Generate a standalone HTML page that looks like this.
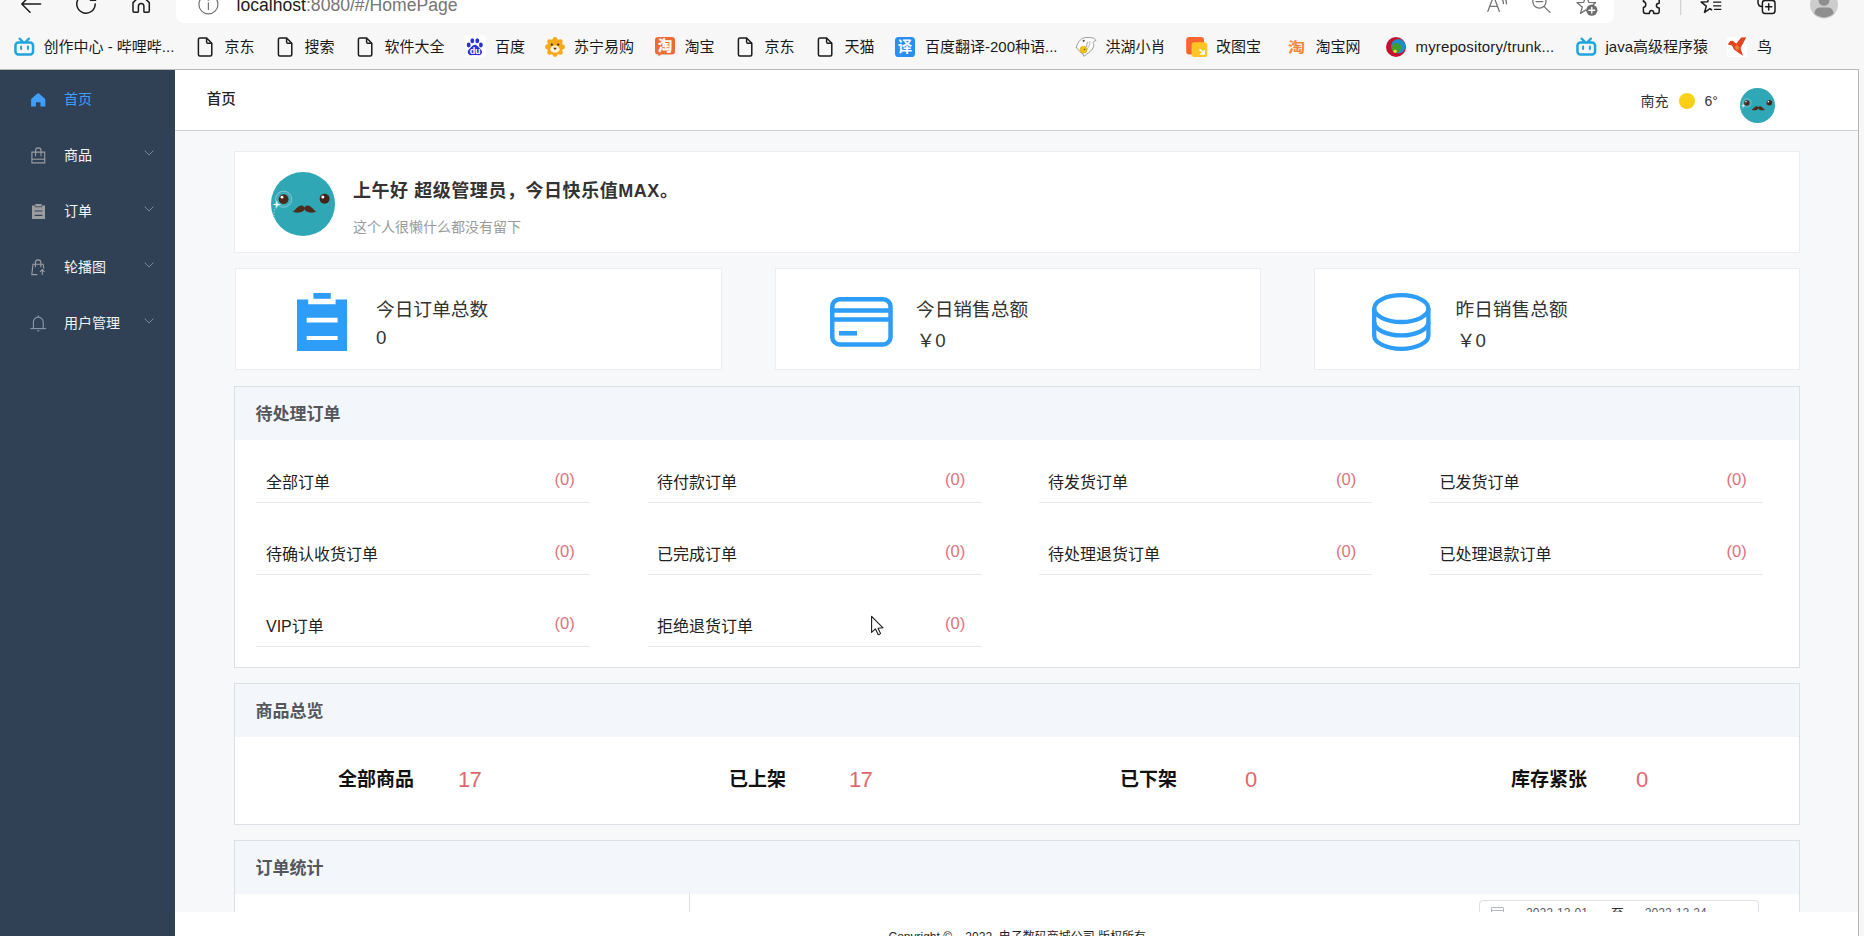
<!DOCTYPE html>
<html lang="zh-CN">
<head>
<meta charset="utf-8">
<title>首页</title>
<style>
*{box-sizing:border-box;margin:0;padding:0}
html,body{width:1864px;height:936px;overflow:hidden;background:#f7f7f7}
body{position:relative;font-family:"Liberation Sans","Noto Sans CJK SC",sans-serif;color:#303133;font-size:14px}
.abs{position:absolute}
svg{display:block;overflow:visible}
/* browser chrome */
#chrome{position:absolute;left:0;top:0;width:1864px;height:69px;background:#f7f7f7}
#addr{position:absolute;left:176px;top:-10px;width:1438px;height:33px;background:#fff;border-radius:8px}
#url{position:absolute;left:236.500px;top:-4.900px;font-size:17.600px;line-height:20px;color:#1b1b1b;white-space:nowrap}
#url span{color:#767676}
.bm{position:absolute;margin-left:-0.500px;top:35.500px;height:22px;line-height:22px;font-size:15px;color:#1a1a1a;white-space:nowrap}
.bi{position:absolute}
/* app */
#topline{position:absolute;left:0;top:69px;width:1859px;height:1px;background:#b9b9b9}
#rightline{position:absolute;left:1858px;top:69px;width:1px;height:867px;background:#b4b4b4}
#side{position:absolute;left:0;top:70px;width:175px;height:866px;background:#304156}
.mi{position:absolute;left:0;width:175px;height:56px}
.mi .t{position:absolute;left:64px;top:18px;font-size:14px;line-height:20px;color:#f2f4f7;white-space:nowrap}
.mi .ic{position:absolute;left:30px;top:20px}
.mi .ar{position:absolute;left:144.3px;top:22.6px}
#head{position:absolute;left:175px;top:70px;width:1683px;height:61px;background:#fff;border-bottom:1px solid #cfd0d3}
#main{position:absolute;left:175px;top:131px;width:1683px;height:781px;background:#f7f8fa}
#cards{position:absolute;left:0;top:0;width:1858px;height:912px;overflow:hidden}
#foot{position:absolute;left:175px;top:912px;width:1683px;height:24px;background:#fff}
.card{position:absolute;background:#fff;border:1px solid #ededf1}
.pn{border-color:#dcdfe6}
.ph{position:absolute;left:0;top:0;right:0;height:53px;background:#f3f6fb}
.ph span{position:absolute;left:20.5px;top:16px;font-size:17px;line-height:24px;font-weight:700;color:#54575c;white-space:nowrap}
.oi{position:absolute;width:335.500px;height:44px;border-bottom:1px solid #e6e7ea}
.oi .l{position:absolute;left:10px;top:13.3px;font-size:16px;line-height:22px;color:#222;white-space:nowrap}
.oi .r{position:absolute;right:15.5px;top:9.7px;font-size:16.6px;line-height:22px;color:#e2727b;white-space:nowrap}
.ol{position:absolute;width:333px;height:1px;background:#e7e8eb}
.oL{position:absolute;font-size:16px;line-height:22px;color:#222;white-space:nowrap}
.oR{position:absolute;font-size:16.600px;line-height:22px;color:#e2727b;white-space:nowrap}
.gi{position:absolute;font-size:19px;line-height:26px;font-weight:700;color:#111;white-space:nowrap}
.gn{position:absolute;font-size:22px;line-height:26px;color:#e1676f;white-space:nowrap;letter-spacing:-0.800px}
.st{position:absolute;font-size:18.7px;line-height:26px;color:#333;white-space:nowrap}
</style>
</head>
<body>
<div id="chrome">
  <div id="addr"></div>
  <svg class="abs" style="left:0;top:0" width="260" height="24" viewBox="0 0 260 24" fill="none" stroke="#1b1b1b" stroke-width="1.5" stroke-linecap="round" stroke-linejoin="round">
    <path d="M40.6 4H22.2M30 -4.2L21.8 4L30 12.2"/>
    <path d="M95.2 4A9.2 9.2 0 1 1 92 -3"/><path d="M90.400 0.300H95.600"/>
    <path d="M141.150 -5L133 2.600V11.100Q133 12.300 134.200 12.300H137.300Q138.400 12.300 138.400 11.200V6.200A2.750 2.750 0 0 1 143.900 6.200V11.200Q143.900 12.300 145 12.300H148.100Q149.300 12.300 149.300 11.100V2.600L141.150 -5"/>
    <g stroke="#727272" stroke-width="1.2"><circle cx="208.400" cy="4.400" r="9.500"/><path d="M208.400 2.800V9.400"/><circle cx="208.400" cy="-0.400" r="0.500"/></g>
  </svg>
  <div id="url">localhost<span>:8080/#/HomePage</span></div>
  <svg class="abs" style="left:1480px;top:0" width="380" height="24" viewBox="1480 0 380 24" fill="none" stroke-linecap="round" stroke-linejoin="round">
    <g stroke="#747474" stroke-width="1.3">
      <path d="M1487.800 11.400L1493.600 -4L1499.400 11.400M1489.800 6.400H1497.400"/><path d="M1501.600 -1.500Q1503.600 1 1503.400 3.600"/><path d="M1504.400 -2.500Q1506.800 0.600 1506.400 3.800"/>
      <circle cx="1539.4" cy="1.6" r="6.6"/><path d="M1536 1.6H1542.8M1544.2 6.6L1550 12.4"/>
      <path d="M1584.900 -1.500L1583.700 2.300L1577 2.700L1582.300 7L1580.500 13.400L1586 9.900"/><path d="M1587.500 -1.500L1588.700 2.300L1595.600 2.700L1593.400 4.600"/>
    </g>
    <circle cx="1591.8" cy="10.2" r="5.6" fill="#6e6e6e"/><path d="M1589 10.2H1594.6M1591.8 7.4V13" stroke="#fff" stroke-width="1.4"/>
    <g stroke="#1b1b1b" stroke-width="1.5">
      <path d="M1648 -2Q1643.4 -2 1643.4 1.4Q1645.8 2 1645.8 4.4Q1645.8 6.8 1643.4 7.4V11.2Q1643.4 13.4 1645.6 13.4H1649.4Q1649.4 10.6 1651.6 10.6Q1653.8 10.6 1653.8 13.4H1657.4Q1659.2 13.4 1659.2 11.4V8Q1656.4 8 1656.4 5.6Q1656.4 3.2 1659.2 3.2V-2"/>
      <path d="M1708.400 -1.500L1707.700 1.800L1701.200 2.100L1706.300 6.100L1704.500 12.400L1710 8.700L1711.600 9.800"/><path d="M1713.600 2.200H1720.800M1713.600 5.800H1720.800M1714.600 9.400H1720.800" stroke-width="1.300"/>
      <path d="M1758 -2V2.2Q1758 6.4 1762 6.4"/><rect x="1762.4" y="0.4" width="12.6" height="13" rx="2.6"/><path d="M1765.6 6.8H1771.8M1768.7 3.7V9.9"/>
    </g>
    <path d="M1680.7 0V14.6" stroke="#cfcfcf" stroke-width="1.2"/>
    <circle cx="1824" cy="4.6" r="14" fill="#cdcdcd"/><circle cx="1824" cy="0.4" r="5.4" fill="#8f8f8f"/><path d="M1814.4 13.6Q1815 7.4 1820 7.4H1828Q1833 7.4 1833.6 13.6Q1829.4 17.4 1824 17.4Q1818.6 17.4 1814.4 13.6Z" fill="#8f8f8f"/>
  </svg>
  <!-- bookmarks -->
  <svg class="bi" style="left:13.5px;top:37px" width="21" height="20" viewBox="0 0 21 20" fill="none" stroke="#20a4dc" stroke-linecap="round"><rect x="1.45" y="5.5" width="17.6" height="12" rx="3" stroke-width="2.5"/><path d="M5.6 1.6L8.6 4.6M14.9 1.6L11.9 4.6" stroke-width="2.2"/><path d="M7.1 9.6V12M13.9 9.6V12" stroke-width="2"/></svg><div class="bm" style="left:44px">创作中心 - 哔哩哔...</div>
  <svg class="bi" style="left:197.5px;top:37px" width="15" height="20" viewBox="0 0 15 20" fill="none" stroke="#1b1b1b" stroke-width="1.5" stroke-linejoin="round"><path d="M1.900 1H8.600L13.800 6.200V17.400Q13.800 18.900 12.300 18.900H1.900Q0.400 18.900 0.400 17.400V2.500Q0.400 1 1.900 1Z"/><path d="M8.6 1V4.9Q8.6 6.2 9.9 6.2H13.8"/></svg><div class="bm" style="left:225px">京东</div>
  <svg class="bi" style="left:277.5px;top:37px" width="15" height="20" viewBox="0 0 15 20" fill="none" stroke="#1b1b1b" stroke-width="1.5" stroke-linejoin="round"><path d="M1.900 1H8.600L13.800 6.200V17.400Q13.800 18.900 12.300 18.900H1.900Q0.400 18.900 0.400 17.400V2.500Q0.400 1 1.900 1Z"/><path d="M8.6 1V4.9Q8.6 6.2 9.9 6.2H13.8"/></svg><div class="bm" style="left:305px">搜索</div>
  <svg class="bi" style="left:357.5px;top:37px" width="15" height="20" viewBox="0 0 15 20" fill="none" stroke="#1b1b1b" stroke-width="1.5" stroke-linejoin="round"><path d="M1.900 1H8.600L13.800 6.200V17.400Q13.800 18.900 12.300 18.900H1.900Q0.400 18.900 0.400 17.400V2.500Q0.400 1 1.900 1Z"/><path d="M8.6 1V4.9Q8.6 6.2 9.9 6.2H13.8"/></svg><div class="bm" style="left:385px">软件大全</div>
  <svg class="bi" style="left:464px;top:35px" width="22" height="22" viewBox="-1 -2 22 22"><rect x="-1" y="-2" width="22" height="22" rx="3" fill="#fdfdfe"/><g fill="#2a2fd6"><ellipse cx="3.700" cy="8" rx="1.900" ry="2.400"/><ellipse cx="7.300" cy="3.800" rx="1.900" ry="2.500"/><ellipse cx="12.300" cy="3.800" rx="1.900" ry="2.500"/><ellipse cx="15.900" cy="8" rx="1.900" ry="2.400"/><path d="M9.900 7.700C12.400 7.700 13.400 10.200 15.200 11.800C17.400 13.600 17.500 15.800 16.200 17.200C14.600 18.900 12.400 18 9.900 18C7.400 18 5.200 18.900 3.600 17.200C2.300 15.800 2.400 13.600 4.600 11.800C6.400 10.200 7.400 7.700 9.900 7.700Z"/></g><text x="9.900" y="17" font-family="Liberation Sans,sans-serif" font-size="9" font-weight="700" fill="#fff" text-anchor="middle" letter-spacing="-0.300">du</text></svg><div class="bm" style="left:495.5px">百度</div>
  <svg class="bi" style="left:545px;top:37px" width="20" height="20" viewBox="0 0 20 20"><g fill="#f5a91d"><circle cx="10" cy="10" r="8"/><circle cx="10" cy="2.400" r="2.400"/><circle cx="15.400" cy="4.600" r="2.400"/><circle cx="17.600" cy="10" r="2.400"/><circle cx="15.400" cy="15.400" r="2.400"/><circle cx="10" cy="17.600" r="2.400"/><circle cx="4.600" cy="15.400" r="2.400"/><circle cx="2.400" cy="10" r="2.400"/><circle cx="4.600" cy="4.600" r="2.400"/></g><ellipse cx="10" cy="12.200" rx="4.600" ry="3.600" fill="#fff4d6"/><circle cx="6.800" cy="7.600" r="1.100" fill="#3a2a10"/><circle cx="13.200" cy="7.600" r="1.100" fill="#3a2a10"/><path d="M8.200 10.800H11.800L10 13Z" fill="#3a2a10"/></svg><div class="bm" style="left:574.5px">苏宁易购</div>
  <svg class="bi" style="left:655px;top:37px" width="20" height="20" viewBox="0 0 20 20"><path d="M3.200 0H16.800Q20 0 20 3.200V14.300Q20 17.500 16.800 17.500H6L3.400 19.600V17.500H3.200Q0 17.500 0 14.300V3.200Q0 0 3.200 0Z" fill="#ef6a35"/><text x="10" y="14.200" font-family="Liberation Sans,Noto Sans CJK SC,sans-serif" font-size="14.500" font-weight="900" fill="#fff" text-anchor="middle">淘</text></svg><div class="bm" style="left:685px">淘宝</div>
  <svg class="bi" style="left:737.5px;top:37px" width="15" height="20" viewBox="0 0 15 20" fill="none" stroke="#1b1b1b" stroke-width="1.5" stroke-linejoin="round"><path d="M1.900 1H8.600L13.800 6.200V17.400Q13.800 18.900 12.300 18.900H1.900Q0.400 18.900 0.400 17.400V2.500Q0.400 1 1.900 1Z"/><path d="M8.6 1V4.9Q8.6 6.2 9.9 6.2H13.8"/></svg><div class="bm" style="left:765px">京东</div>
  <svg class="bi" style="left:817.5px;top:37px" width="15" height="20" viewBox="0 0 15 20" fill="none" stroke="#1b1b1b" stroke-width="1.5" stroke-linejoin="round"><path d="M1.900 1H8.600L13.800 6.200V17.400Q13.800 18.900 12.300 18.900H1.900Q0.400 18.900 0.400 17.400V2.500Q0.400 1 1.900 1Z"/><path d="M8.6 1V4.9Q8.6 6.2 9.9 6.2H13.8"/></svg><div class="bm" style="left:845px">天猫</div>
  <svg class="bi" style="left:895px;top:37px" width="20" height="20" viewBox="0 0 20 20"><rect width="20" height="20" rx="3.600" fill="#2b8df2"/><text x="10" y="15.300" font-family="Liberation Sans,Noto Sans CJK SC,sans-serif" font-size="14.500" font-weight="700" fill="#fff" text-anchor="middle">译</text></svg><div class="bm" style="left:925.5px">百度翻译-200种语...</div>
  <svg class="bi" style="left:1076px;top:37px" width="21" height="20" viewBox="0 0 21 20" fill="none" stroke="#8d8d8d" stroke-width="0.900" stroke-linecap="round"><path d="M0.400 10.400C0.800 8.600 1.400 7 2.200 5.800C3.400 3.800 5 2 6.600 1.300C8.600 0.400 13 0.200 16.400 0.900C18.200 1.300 19.400 2.400 19.900 3.500C18.600 3.700 17.600 4.400 17.100 5.400C17.800 6.800 17.900 8.200 17.600 9.600C17 11.600 15.800 13 14.400 14.300C13.200 15.400 11.900 16.300 10.600 17.200L7.900 19.300L6.900 16.900C5.600 16.300 4.400 15.400 3.500 14.200C2.400 13 1.200 11.800 0.400 10.400Z" fill="#fdfdfd"/><path d="M11.900 5.200C10.800 6.600 10.400 8 10.700 9.600"/><path d="M13.800 4.400C14 7 13.200 9.400 11.600 11.400" stroke="#b0b0b0"/><circle cx="7.700" cy="3.800" r="1.100" fill="#5b4a4a" stroke="none"/><circle cx="7.500" cy="12.700" r="3.500" fill="#f0c31c" stroke="#c79a12" stroke-width="0.500"/><circle cx="8.500" cy="12.500" r="0.800" fill="#7a5a10" stroke="none"/></svg><div class="bm" style="left:1106px">洪湖小肖</div>
  <svg class="bi" style="left:1185.500px;top:37px" width="22" height="20" viewBox="0 0 22 20"><rect x="0.200" y="0.100" width="17.800" height="17.400" rx="3.200" fill="#f9652e"/><rect x="5.600" y="5.200" width="15.600" height="14.800" rx="2.800" fill="#ffc527"/><path d="M13.600 12.400L18 16.800M18.200 13V17H14.200" fill="none" stroke="#fff" stroke-width="1.500"/></svg><div class="bm" style="left:1216.5px">改图宝</div>
  <div class="bm" style="left:1288.800px;top:35.800px;font-size:14.500px;font-weight:700;color:#f6843f;transform:scale(1.180,0.960);transform-origin:0 50%">淘</div><div class="bm" style="left:1316px">淘宝网</div>
  <svg class="bi" style="left:1386px;top:37px" width="20" height="20" viewBox="0 0 20 20"><circle cx="10" cy="10" r="10" fill="#c8102e"/><circle cx="12.300" cy="9.200" r="7.200" fill="#1f8ccc"/><circle cx="10.400" cy="11" r="4.800" fill="#3e9e2c"/><circle cx="9.100" cy="14.200" r="1.800" fill="#d9d92e"/></svg><div class="bm" style="left:1416px;letter-spacing:.14px">myrepository/trunk...</div>
  <svg class="bi" style="left:1576px;top:37px" width="21" height="20" viewBox="0 0 21 20" fill="none" stroke="#20a4dc" stroke-linecap="round"><rect x="1.45" y="5.5" width="17.6" height="12" rx="3" stroke-width="2.5"/><path d="M5.6 1.6L8.6 4.6M14.9 1.6L11.9 4.6" stroke-width="2.2"/><path d="M7.1 9.6V12M13.9 9.6V12" stroke-width="2"/></svg><div class="bm" style="left:1606px">java高级程序猿</div>
  <svg class="bi" style="left:1727px;top:37px" width="20" height="20" viewBox="0 0 20 20"><rect width="20" height="20" rx="1.500" fill="#fff"/><path d="M0.700 7.600L3.200 4.100L5.600 3.700L9.300 6.400L14.200 0.400L19.300 0.300L13.600 11L15.900 18.800L11.800 15.900L7 12.600L5 8.600Z" fill="#e4431f"/><path d="M9.300 7.200L12.800 10.800L10.800 13.800L7.400 10.800Z" fill="#f57a3c"/></svg><div class="bm" style="left:1757.5px">鸟</div>
</div>
<div id="topline"></div>
<div id="side">
  <div class="mi" style="top:1px">
    <svg class="ic" style="left:31px;top:21.5px" width="14.4" height="14" viewBox="0 0 14.4 14"><path d="M7.2 0.2 Q7.6 0.2 8 0.55 L13.7 5.4 Q14.3 5.9 14.3 6.7 L14.3 13.6 L9.5 13.6 L9.5 9.2 L4.9 9.2 L4.9 13.6 L0.1 13.6 L0.1 6.7 Q0.1 5.9 0.7 5.4 L6.4 0.55 Q6.8 0.2 7.2 0.2Z" fill="#409eff"/></svg>
    <div class="t" style="color:#409eff">首页</div></div>
  <div class="mi" style="top:57px">
    <svg class="ic" style="left:31px;top:20px" width="15" height="17" viewBox="0 0 15 17" fill="none" stroke="#9a9da3" stroke-width="1.1"><path d="M0.9 5.1H13.7V15.9H0.9Z"/><path d="M0.9 12.2H13.7"/><path d="M4.6 9.2V3.6A2.7 2.7 0 0 1 10 3.6V9.2"/></svg>
    <div class="t">商品</div><svg class="ar" width="10" height="6" viewBox="0 0 10 6" fill="none" stroke="#7a899d" stroke-width="1"><path d="M0.6 0.6L5 5L9.4 0.6"/></svg></div>
  <div class="mi" style="top:113px">
    <svg class="ic" style="left:31.5px;top:21px" width="13" height="15" viewBox="0 0 13 15"><path d="M0 1.6H3.3V0H9.7V1.6H13V15H0Z" fill="#9c9da0"/><path d="M3.3 1.6V2.8H9.7V1.6" fill="none" stroke="#304156" stroke-width="0.8"/><path d="M2.6 7H10.4M2.6 11.4H10.4" stroke="#304156" stroke-width="1.2"/></svg>
    <div class="t">订单</div><svg class="ar" width="10" height="6" viewBox="0 0 10 6" fill="none" stroke="#7a899d" stroke-width="1"><path d="M0.6 0.6L5 5L9.4 0.6"/></svg></div>
  <div class="mi" style="top:169px">
    <svg class="ic" style="left:31px;top:20px" width="15" height="17" viewBox="0 0 15 17" fill="none" stroke="#9a9da3" stroke-width="1.1"><path d="M6.4 15.6H0.8L2 5.2H12.2L12.8 9.6"/><path d="M4.4 8.2V3.6A2.7 2.7 0 0 1 9.8 3.6V8.2"/><path d="M11.3 16V10.6M9 12.8L11.3 10.5L13.6 12.8"/></svg>
    <div class="t">轮播图</div><svg class="ar" width="10" height="6" viewBox="0 0 10 6" fill="none" stroke="#7a899d" stroke-width="1"><path d="M0.6 0.6L5 5L9.4 0.6"/></svg></div>
  <div class="mi" style="top:225px">
    <svg class="ic" style="left:30px;top:20px" width="17" height="17" viewBox="0 0 17 17" fill="none" stroke="#8c99a8" stroke-width="1.1"><path d="M0.4 13.6H16.2"/><path d="M3.4 13.6V7A4.9 4.9 0 0 1 13.2 7V13.6"/><path d="M8.3 2.1V0.6"/><path d="M7.3 15.8H9.3"/></svg>
    <div class="t">用户管理</div><svg class="ar" width="10" height="6" viewBox="0 0 10 6" fill="none" stroke="#7a899d" stroke-width="1"><path d="M0.6 0.6L5 5L9.4 0.6"/></svg></div>
</div>
<div id="head">
  <div class="abs" style="left:31.700px;top:19px;font-size:14.500px;line-height:20px;font-weight:500;color:#222">首页</div>
  <div class="abs" style="left:1465.500px;top:20.500px;font-size:14px;line-height:20px;color:#333">南充</div>
  <div class="abs" style="left:1503.900px;top:22.700px;width:16.500px;height:16.500px;border-radius:50%;background:linear-gradient(180deg,#f8d616,#fbc913)"></div>
  <div class="abs" style="left:1529.500px;top:21px;font-size:14px;line-height:20px;color:#333">6°</div>
  <svg class="abs" style="left:1565px;top:18px" width="35" height="35" viewBox="0 0 64 64"><circle cx="32" cy="32" r="32" fill="#30a7b5"/><circle cx="12.6" cy="27.2" r="8.1" fill="rgba(255,255,255,.08)" stroke="rgba(255,255,255,.38)" stroke-width=".9"/><circle cx="12.6" cy="27.2" r="4.9" fill="#4a2a1c"/><circle cx="11" cy="25.2" r="1.4" fill="#fff"/><circle cx="53.6" cy="26.8" r="5" fill="#43241a"/><circle cx="51.8" cy="25" r="1.5" fill="#fff"/><path d="M21.4 39.6C23.5 39.4 26.5 33.6 30.2 33.4C32.2 33.3 33 34.6 33.5 35.6C34 34.6 34.8 33.3 36.8 33.4C40.5 33.6 43.5 39.4 45.6 39.6C43 41 38 41 35.6 39.6C34.4 38.9 33.8 37.9 33.5 37.2C33.2 37.9 32.6 38.9 31.4 39.6C29 41 24 41 21.4 39.6Z" fill="#4d2b1d"/><path d="M5.8 28L6.7 31.6L10.2 32.5L6.7 33.4L5.8 37L4.9 33.4L1.4 32.5L4.9 31.6Z" fill="#fff" opacity=".9"/><path d="M4.6 34.5C3 38 2.6 42 3.4 46" fill="none" stroke="rgba(255,255,255,.6)" stroke-width=".8" stroke-dasharray="1.4 1.4"/></svg>
</div>
<div id="main"></div>
<div id="cards">
  <!-- welcome -->
  <div class="card" style="left:234px;top:151px;width:1566px;height:102px"></div>
  <svg class="abs" style="left:271.3px;top:171.8px" width="64" height="64" viewBox="0 0 64 64"><circle cx="32" cy="32" r="32" fill="#30a7b5"/><circle cx="12.6" cy="27.2" r="8.1" fill="rgba(255,255,255,.08)" stroke="rgba(255,255,255,.38)" stroke-width=".9"/><circle cx="12.6" cy="27.2" r="4.9" fill="#4a2a1c"/><circle cx="11" cy="25.2" r="1.4" fill="#fff"/><circle cx="53.6" cy="26.8" r="5" fill="#43241a"/><circle cx="51.8" cy="25" r="1.5" fill="#fff"/><path d="M21.4 39.6C23.5 39.4 26.5 33.6 30.2 33.4C32.2 33.3 33 34.6 33.5 35.6C34 34.6 34.8 33.3 36.8 33.4C40.5 33.6 43.5 39.4 45.6 39.6C43 41 38 41 35.6 39.6C34.4 38.9 33.8 37.9 33.5 37.2C33.2 37.9 32.6 38.9 31.4 39.6C29 41 24 41 21.4 39.6Z" fill="#4d2b1d"/><path d="M5.8 28L6.7 31.6L10.2 32.5L6.7 33.4L5.8 37L4.9 33.4L1.4 32.5L4.9 31.6Z" fill="#fff" opacity=".9"/><path d="M4.6 34.5C3 38 2.6 42 3.4 46" fill="none" stroke="rgba(255,255,255,.6)" stroke-width=".8" stroke-dasharray="1.4 1.4"/></svg>
  <div class="abs" style="left:353px;top:179px;font-size:18px;line-height:24px;font-weight:700;color:#333;white-space:nowrap;letter-spacing:.55px">上午好 超级管理员，今日快乐值MAX。</div>
  <div class="abs" style="left:353px;top:217px;font-size:14px;line-height:20px;color:#9a9a9a;white-space:nowrap">这个人很懒什么都没有留下</div>
  <!-- stats -->
  <div class="card" style="left:235px;top:268px;width:487px;height:102px"></div>
  <div class="card" style="left:775px;top:268px;width:486px;height:102px"></div>
  <div class="card" style="left:1314px;top:268px;width:486px;height:102px"></div>
  <svg class="abs" style="left:297px;top:293px" width="50" height="58" viewBox="0 0 50 58"><path d="M16.4 0H33.8V5.8H16.4Z" fill="#2d9df8"/><path d="M0 6.4H11.2V11.2H38.6V6.4H50V58H0Z" fill="#2d9df8"/><path d="M9.7 24.7H40.6V29.4H9.7ZM9.7 42.9H40.6V47.1H9.7Z" fill="#fff"/></svg>
  <svg class="abs" style="left:830px;top:297px" width="63" height="50" viewBox="0 0 63 50" fill="none" stroke="#2d9df8" stroke-width="4.5"><rect x="2.25" y="2.25" width="58.3" height="45.2" rx="7.5" ry="7.5"/><path d="M2 13.4H61M2 22.6H61"/><path d="M9 36.3H27" stroke-width="4.6"/></svg>
  <svg class="abs" style="left:1372px;top:293px" width="59" height="58" viewBox="0 0 59 58" fill="none" stroke="#2d9df8" stroke-width="4.3"><ellipse cx="29.3" cy="15.6" rx="27.1" ry="13.4"/><path d="M2.2 15.6V42.4A27.1 13.4 0 0 0 56.4 42.4V15.6"/><path d="M2.2 29A27.1 13.4 0 0 0 56.4 29"/></svg>
  <div class="st" style="left:376px;top:297px">今日订单总数</div>
  <div class="st" style="left:376px;top:325px">0</div>
  <div class="st" style="left:916px;top:297px">今日销售总额</div>
  <div class="st" style="left:916.500px;top:327.800px">￥0</div>
  <div class="st" style="left:1455.5px;top:297px">昨日销售总额</div>
  <div class="st" style="left:1456.800px;top:327.800px">￥0</div>
  <!-- pending orders -->
  <div class="card pn" style="left:234px;top:386px;width:1566px;height:282px"><div class="ph"><span>待处理订单</span></div></div>
  <div class="ol" style="left:256px;top:502px"></div><div class="oL" style="left:266px;top:472.3px">全部订单</div><div class="oR" style="left:554.4px;top:468.7px">(0)</div>
  <div class="ol" style="left:647.6px;top:502px"></div><div class="oL" style="left:657px;top:472.3px">待付款订单</div><div class="oR" style="left:945px;top:468.7px">(0)</div>
  <div class="ol" style="left:1039.4px;top:502px"></div><div class="oL" style="left:1048px;top:472.3px">待发货订单</div><div class="oR" style="left:1336px;top:468.7px">(0)</div>
  <div class="ol" style="left:1430px;top:502px"></div><div class="oL" style="left:1439.4px;top:472.3px">已发货订单</div><div class="oR" style="left:1726.6px;top:468.7px">(0)</div>
  <div class="ol" style="left:256px;top:574px"></div><div class="oL" style="left:266px;top:544.3px">待确认收货订单</div><div class="oR" style="left:554.4px;top:540.7px">(0)</div>
  <div class="ol" style="left:647.6px;top:574px"></div><div class="oL" style="left:657px;top:544.3px">已完成订单</div><div class="oR" style="left:945px;top:540.7px">(0)</div>
  <div class="ol" style="left:1039.4px;top:574px"></div><div class="oL" style="left:1048px;top:544.3px">待处理退货订单</div><div class="oR" style="left:1336px;top:540.7px">(0)</div>
  <div class="ol" style="left:1430px;top:574px"></div><div class="oL" style="left:1439.4px;top:544.3px">已处理退款订单</div><div class="oR" style="left:1726.6px;top:540.7px">(0)</div>
  <div class="ol" style="left:256px;top:646px"></div><div class="oL" style="left:266px;top:616.3px">VIP订单</div><div class="oR" style="left:554.4px;top:612.7px">(0)</div>
  <div class="ol" style="left:647.6px;top:646px"></div><div class="oL" style="left:657px;top:616.3px">拒绝退货订单</div><div class="oR" style="left:945px;top:612.7px">(0)</div>
  <!-- goods overview -->
  <div class="card pn" style="left:234px;top:683px;width:1566px;height:142px"><div class="ph"><span>商品总览</span></div></div>
  <div class="gi" style="left:338px;top:767px">全部商品</div><div class="gn" style="left:458px;top:767px">17</div>
  <div class="gi" style="left:729px;top:767px">已上架</div><div class="gn" style="left:849px;top:767px">17</div>
  <div class="gi" style="left:1120px;top:767px">已下架</div><div class="gn" style="left:1245px;top:767px">0</div>
  <div class="gi" style="left:1511px;top:767px">库存紧张</div><div class="gn" style="left:1636px;top:767px">0</div>
  <!-- order stats -->
  <div class="card pn" style="left:234px;top:840px;width:1566px;height:300px"><div class="ph"><span>订单统计</span></div></div>
  <div class="abs" style="left:689px;top:893px;width:1px;height:200px;background:#dcdfe6"></div>
  <div class="abs" style="left:1479px;top:900px;width:280px;height:32px;border:1px solid #dcdfe6;border-radius:4px;background:#fff">
    <div class="abs" style="left:11px;top:6px;width:13px;height:12px;border:1px solid #b4b8c0;border-radius:1px"></div>
    <div class="abs" style="left:11px;top:9px;width:13px;height:1px;background:#b4b8c0"></div>
    <div class="abs" style="left:46px;top:1.700px;font-size:12.100px;line-height:20px;color:#555a63;white-space:nowrap">2022-12-01</div>
    <div class="abs" style="left:131px;top:2.500px;font-size:13px;line-height:20px;color:#303133">至</div>
    <div class="abs" style="left:164.800px;top:1.700px;font-size:12.100px;line-height:20px;color:#555a63;white-space:nowrap">2022-12-24</div>
  </div>
</div>
<div id="foot">
  <div class="abs" style="left:713.500px;top:16.500px;font-size:12px;line-height:16px;color:#222;white-space:nowrap">Copyright ©&nbsp;&nbsp;&nbsp;&nbsp;2022&nbsp; 电子数码商城公司 版权所有</div>
</div>
<svg class="abs" style="left:868px;top:612px" width="20" height="26" viewBox="868 612 20 26"><path d="M871.600 616.300V632.400L875.500 628.900L878.100 634.600Q879.600 634.800 880.500 633.500L878.100 628.200L883 627.800Z" fill="#fff" stroke="#1a1a1a" stroke-width="1.100" stroke-linejoin="round"/></svg>
<div id="rightline"></div>
</body>
</html>
